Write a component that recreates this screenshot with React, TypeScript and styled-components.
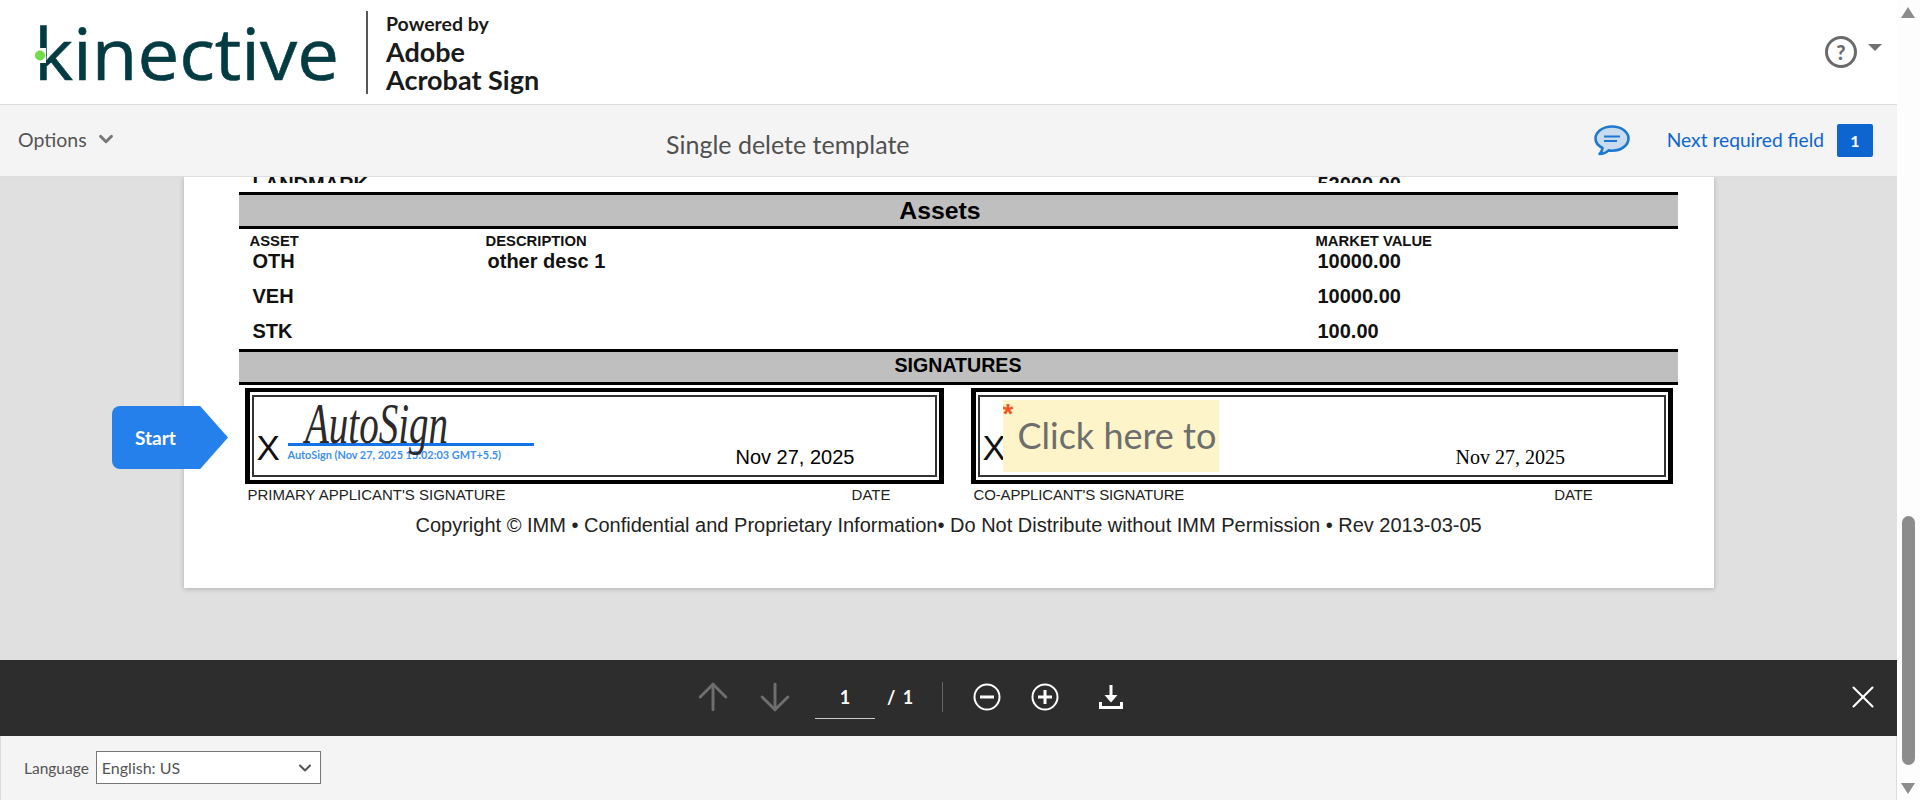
import React from 'react'
import styled, { createGlobalStyle } from 'styled-components'
import { ArrowUp, ArrowDown, X as CloseIcon, ChevronDown } from 'lucide-react'

const GlobalStyle = createGlobalStyle`
  html, body {
    margin: 0;
    height: 100%;
    overflow: hidden;
    background: #fff;
  }
  * {
    box-sizing: border-box;
  }
`

const UI_FONT = `Lato, "Open Sans", sans-serif`
const DOC_FONT = `"Liberation Sans", Arial, sans-serif`

const Shell = styled.div`
  display: flex;
  width: 1920px;
  height: 800px;
  overflow: hidden;
  font-family: ${UI_FONT};
`
const Main = styled.div`
  display: flex;
  flex-direction: column;
  width: 1897px;
  height: 800px;
`
const Header = styled.header`
  display: flex;
  align-items: center;
  height: 105px;
  flex: none;
  padding: 0 15px 0 37px;
  background: #fff;
  border-bottom: 1px solid #dcdcdc;
`
const LogoDrawing = styled.svg`
  display: block;
  flex: none;
  overflow: visible;
`
const Divider = styled.div`
  width: 2px;
  height: 83px;
  margin-left: 29px;
  background: #555;
`
const Powered = styled.div`
  display: flex;
  flex-direction: column;
  margin-left: 18px;
  color: #1a1a1a;
  font-weight: 700;
`
const PoweredBy = styled.span`
  margin: 2px 0;
  font-size: 19.500px;
  line-height: 24px;
`
const BrandLine = styled.span`
  font-size: 27px;
  line-height: 28px;
  white-space: nowrap;
`
const HelpGroup = styled.div`
  display: flex;
  align-items: center;
  gap: 11px;
  margin-left: auto;
  margin-top: -1px;
`
const HelpCircle = styled.span`
  display: flex;
  align-items: center;
  justify-content: center;
  width: 32px;
  height: 32px;
  border: 3px solid #6a6a6a;
  border-radius: 50%;
  color: #6a6a6a;
  font-size: 20px;
  font-weight: 900;
`
const Caret = styled.span`
  width: 0;
  height: 0;
  margin-top: -8px;
  border-left: 7px solid transparent;
  border-right: 7px solid transparent;
  border-top: 7px solid #707070;
`
const Toolbar = styled.div`
  display: flex;
  align-items: center;
  height: 72px;
  flex: none;
  padding-right: 24px;
  background: #f4f4f4;
  border-bottom: 1px solid #dedede;
`
const OptionsButton = styled.div`
  display: flex;
  align-items: center;
  gap: 8px;
  width: 666px;
  padding: 0 0 3px 18px;
  color: #555;
  font-size: 19.500px;
  flex: none;
`
const Title = styled.div`
  color: #505050;
  font-size: 25px;
  margin-top: 6px;
`
const ToolbarRight = styled.div`
  display: flex;
  align-items: center;
  margin-left: auto;
`
const NextField = styled.span`
  margin: 0 0 3px 37px;
  color: #0d66d0;
  font-size: 19.200px;
  white-space: nowrap;
`
const CountBadge = styled.span`
  display: flex;
  align-items: center;
  justify-content: center;
  width: 36px;
  height: 33px;
  margin-left: 13px;
  border-radius: 2px;
  background: #0d66d0;
  color: #fff;
  font-size: 16px;
  font-weight: 700;
`
const Canvas = styled.main`
  position: relative;
  flex: 1;
  min-height: 0;
  overflow: hidden;
  background: #e0e0e0;
`
const Page = styled.div`
  width: 1530px;
  height: 411px;
  margin: 0 auto;
  padding: 0 36px 0 55px;
  overflow: hidden;
  background: #fff;
  box-shadow: 0 1px 5px rgba(0, 0, 0, 0.22);
  font-family: ${DOC_FONT};
  color: #111;
`
const ClippedRow = styled.div`
  display: grid;
  grid-template-columns: 235px 830px 1fr;
  align-items: end;
  height: 6px;
  margin-bottom: 9px;
  padding-left: 14px;
  overflow: hidden;
  font-size: 20px;
  font-weight: 700;
  line-height: 14px;
`
const Band = styled.div<{ $tall?: boolean }>`
  display: flex;
  align-items: center;
  justify-content: center;
  height: ${(p) => (p.$tall ? 37 : 36)}px;
  padding: ${(p) => (p.$tall ? '0 36px 0 0' : '0 0 3px')};
  border-top: 3px solid #000;
  border-bottom: 3px solid #000;
  background: #bfbfbf;
  color: #000;
  font-weight: 700;
  font-size: ${(p) => (p.$tall ? 24.8 : 19.6)}px;
`
const LabelRow = styled.div`
  display: grid;
  grid-template-columns: 236px 830px 1fr;
  padding: 5px 0 0 11px;
  font-size: 14.800px;
  font-weight: 700;
  line-height: 15px;
`
const ValueList = styled.div`
  display: flex;
  flex-direction: column;
  gap: 11px;
  margin-bottom: 6px;
`
const ValueRow = styled.div`
  display: grid;
  grid-template-columns: 235px 830px 1fr;
  padding-left: 14px;
  font-size: 20px;
  font-weight: 700;
  line-height: 24px;
`
const Boxes = styled.div`
  display: flex;
  gap: 27px;
  margin: 3px 0 0 6px;
`
const SignBox = styled.div<{ $width: number }>`
  width: ${(p) => p.$width}px;
  height: 96px;
  padding: 3px 2px;
  border: 4px solid #000;
  border-left-width: 5px;
  border-right-width: 5px;
`
const SignInner = styled.div`
  position: relative;
  display: flex;
  align-items: flex-end;
  height: 100%;
  padding-left: 3px;
  border: 2px solid #333;
`
const BigX = styled.span`
  width: 31px;
  flex: none;
  margin-bottom: 7px;
  font-size: 35px;
  line-height: 40px;
  color: #111;
`
const SignArea = styled.div`
  display: flex;
  flex-direction: column;
  width: 246px;
  margin-bottom: 13px;
`
const SignLine = styled.div`
  height: 3px;
  background: #1473e6;
`
const SignCaption = styled.span`
  margin-top: 1px;
  color: #3d8ff0;
  font-family: ${UI_FONT};
  font-size: 10.900px;
  font-weight: 700;
  line-height: 15px;
  white-space: nowrap;
`
const Handwriting = styled.svg`
  position: absolute;
  left: 51px;
  top: 4px;
  overflow: visible;
`
const SignDate = styled.span<{ $serif?: boolean; $left: number }>`
  margin-left: ${(p) => p.$left}px;
  margin-bottom: 6px;
  color: #000;
  font-family: ${(p) => (p.$serif ? `"Liberation Serif", serif` : DOC_FONT)};
  font-size: 20px;
  line-height: 24px;
  white-space: nowrap;
`
const SignField = styled.div`
  position: relative;
  display: flex;
  align-items: center;
  width: 216px;
  height: 72px;
  flex: none;
  margin: 0 0 3px -11px;
  padding: 0 0 2px 15px;
  overflow: hidden;
  background: #fdf5c9;
  color: #6e6e6e;
  font-family: ${UI_FONT};
  font-size: 36px;
  white-space: nowrap;
`
const RequiredStar = styled.span`
  position: absolute;
  left: 0;
  top: 0;
  color: #f0561d;
  font-family: ${DOC_FONT};
  font-size: 28px;
  font-weight: 700;
  line-height: 28px;
`
const CaptionRow = styled.div`
  display: flex;
  gap: 83px;
  margin: 2px 0 0 9px;
  font-size: 15px;
  line-height: 18px;
  color: #222;
`
const Caption = styled.div<{ $width: number; $narrow?: boolean }>`
  display: flex;
  justify-content: space-between;
  width: ${(p) => p.$width}px;
  letter-spacing: ${(p) => (p.$narrow ? '-0.15px' : '0')};
`
const Copyright = styled.div`
  margin: 9px 0 0 177px;
  font-size: 20px;
  line-height: 24px;
  color: #222;
  white-space: nowrap;
`
const StartTag = styled.div`
  position: absolute;
  left: 112px;
  top: 229px;
  display: flex;
  align-items: center;
  width: 116px;
  height: 63px;
  padding-left: 23px;
  border-radius: 8px 0 0 8px;
  background: #2680eb;
  clip-path: polygon(0 0, 76% 0, 100% 50%, 76% 100%, 0 100%);
  color: #fff;
  font-size: 19px;
  font-weight: 700;
`
const PdfBar = styled.div`
  display: flex;
  align-items: center;
  height: 76px;
  flex: none;
  padding: 0 15px 2px 691px;
  background: #2d2d2d;
  color: #fff;
`
const PageInput = styled.span`
  display: block;
  width: 60px;
  height: 40px;
  margin: 4px 0 0 18.5px;
  border-bottom: 1px solid #ccc;
  font-size: 18px;
  font-weight: 700;
  line-height: 36px;
  text-align: center;
`
const PageTotal = styled.span`
  margin: 0 0 0 12px;
  font-size: 18px;
  font-weight: 700;
  word-spacing: 3px;
  white-space: nowrap;
`
const BarSeparator = styled.span`
  width: 1px;
  height: 30px;
  margin: 0 30px 0 29px;
  background: #666;
`
const IconSlot = styled.span<{ $right?: number; $muted?: boolean }>`
  display: flex;
  margin-right: ${(p) => p.$right ?? 0}px;
  color: ${(p) => (p.$muted ? '#6e6e6e' : '#fff')};
`
const CloseSlot = styled.span`
  display: flex;
  margin-left: auto;
`
const Footer = styled.footer`
  display: flex;
  align-items: center;
  gap: 7px;
  height: 64px;
  flex: none;
  padding: 0 0 1px 23px;
  background: #f4f4f4;
  border-left: 1px solid #ddd;
  border-right: 1px solid #ddd;
  color: #555;
  font-size: 15.500px;
`
const LangSelect = styled.div`
  display: flex;
  align-items: center;
  justify-content: space-between;
  width: 225px;
  height: 33px;
  padding: 0 5px;
  border: 1px solid #777;
  background: #fff;
  font-size: 16px;
`
const ScrollTrack = styled.div`
  position: relative;
  width: 23px;
  height: 800px;
  flex: none;
  background: #fdfdfd;
`
const ScrollThumb = styled.div`
  position: absolute;
  left: 5px;
  top: 516px;
  width: 13px;
  height: 249px;
  border-radius: 7px;
  background: #8c8c8c;
`
const ScrollArrow = styled.span<{ $down?: boolean }>`
  position: absolute;
  left: 4px;
  top: ${(p) => (p.$down ? 783 : 7)}px;
  width: 0;
  height: 0;
  border-left: 7.5px solid transparent;
  border-right: 7.5px solid transparent;
  ${(p) => (p.$down ? 'border-top: 11px solid #8c8c8c;' : 'border-bottom: 11px solid #8c8c8c;')}
`

const Logo = () => (
  <LogoDrawing width="300" height="62" viewBox="0 0 300 62">
    <text
      x="-3"
      y="59"
      fontFamily="'Open Sans', sans-serif"
      fontSize="72"
      fontWeight="400"
      fill="#033b42"
      stroke="#033b42"
      strokeWidth="0.6"
      textLength="305"
      lengthAdjust="spacingAndGlyphs"
    >
      kinective
    </text>
    <rect x="-2" y="27" width="11" height="15" fill="#fff" />
    <circle cx="3" cy="34.500" r="5" fill="#6fdc4a" />
  </LogoDrawing>
)

const CommentIcon = () => (
  <svg width="36" height="31" viewBox="0 0 36 31">
    <path
      d="M18 1.500C8.800 1.500 1.500 7 1.500 13.500c0 4 2.700 7.300 7 9.500-.3 2.500-1.300 4.500-3 6 3.500 0 6.500-1.200 9-3.600 1.100.2 2.300.3 3.500.3 9.200 0 16.500-5.500 16.500-12.200S27.200 1.500 18 1.500z"
      fill="#c9dcef"
      stroke="#1f78cf"
      strokeWidth="2.600"
      strokeLinejoin="round"
    />
    <path d="M10 11.500h16M10 16h13" stroke="#1f78cf" strokeWidth="1.800" />
  </svg>
)

const ZoomIcon = ({ plus }: { plus?: boolean }) => (
  <svg width="28" height="28" viewBox="0 0 28 28" fill="none" stroke="#fff">
    <circle cx="14" cy="14" r="12.500" strokeWidth="2" />
    <path d="M7 14h14" strokeWidth="3" />
    {plus && <path d="M14 7v14" strokeWidth="3" />}
  </svg>
)

const DownloadIcon = () => (
  <svg width="24" height="24" viewBox="0 0 24 24" fill="#fff">
    <path d="M10.500 0h3v11h-3z" />
    <path d="M5.500 10h13L12 17.500z" />
    <path d="M0 17h3v4h18v-4h3v7H0z" />
  </svg>
)

const App = () => (
  <Shell>
    <GlobalStyle />
    <Main>
      <Header>
        <Logo />
        <Divider />
        <Powered>
          <PoweredBy>Powered by</PoweredBy>
          <BrandLine>Adobe</BrandLine>
          <BrandLine>Acrobat Sign</BrandLine>
        </Powered>
        <HelpGroup>
          <HelpCircle>?</HelpCircle>
          <Caret />
        </HelpGroup>
      </Header>
      <Toolbar>
        <OptionsButton>
          Options
          <ChevronDown size={22} strokeWidth={3.200} color="#777" />
        </OptionsButton>
        <Title>Single delete template</Title>
        <ToolbarRight>
          <CommentIcon />
          <NextField>Next required field</NextField>
          <CountBadge>1</CountBadge>
        </ToolbarRight>
      </Toolbar>
      <Canvas>
        <Page>
          <ClippedRow>
            <span>LANDMARK</span>
            <span />
            <span>52000.00</span>
          </ClippedRow>
          <Band $tall>Assets</Band>
          <LabelRow>
            <span>ASSET</span>
            <span>DESCRIPTION</span>
            <span>MARKET VALUE</span>
          </LabelRow>
          <ValueList>
            <ValueRow>
              <span>OTH</span>
              <span>other desc 1</span>
              <span>10000.00</span>
            </ValueRow>
            <ValueRow>
              <span>VEH</span>
              <span />
              <span>10000.00</span>
            </ValueRow>
            <ValueRow>
              <span>STK</span>
              <span />
              <span>100.00</span>
            </ValueRow>
          </ValueList>
          <Band>SIGNATURES</Band>
          <Boxes>
            <SignBox $width={699}>
              <SignInner>
                <BigX>X</BigX>
                <SignArea>
                  <SignLine />
                  <SignCaption>AutoSign (Nov 27, 2025 15:02:03 GMT+5.5)</SignCaption>
                </SignArea>
                <Handwriting width="143" height="56" viewBox="0 0 143 56">
                  <text
                    x="0"
                    y="42"
                    fontFamily="'Liberation Serif', serif"
                    fontStyle="italic"
                    fontSize="58"
                    fill="#2a2a2a"
                    textLength="143"
                    lengthAdjust="spacingAndGlyphs"
                  >
                    AutoSign
                  </text>
                </Handwriting>
                <SignDate $left={202}>Nov 27, 2025</SignDate>
              </SignInner>
            </SignBox>
            <SignBox $width={702}>
              <SignInner>
                <BigX>X</BigX>
                <SignField>
                  <RequiredStar>*</RequiredStar>
                  Click here to
                </SignField>
                <SignDate $serif $left={237}>
                  Nov 27, 2025
                </SignDate>
              </SignInner>
            </SignBox>
          </Boxes>
          <CaptionRow>
            <Caption $width={643}>
              <span>PRIMARY APPLICANT'S SIGNATURE</span>
              <span>DATE</span>
            </Caption>
            <Caption $width={619} $narrow>
              <span>CO-APPLICANT'S SIGNATURE</span>
              <span>DATE</span>
            </Caption>
          </CaptionRow>
          <Copyright>
            Copyright © IMM • Confidential and Proprietary Information• Do Not Distribute without IMM Permission • Rev 2013-03-05
          </Copyright>
        </Page>
        <StartTag>Start</StartTag>
      </Canvas>
      <PdfBar>
        <IconSlot $muted $right={17.500}>
          <ArrowUp size={44} strokeWidth={1.600} />
        </IconSlot>
        <IconSlot $muted>
          <ArrowDown size={44} strokeWidth={1.600} />
        </IconSlot>
        <PageInput>1</PageInput>
        <PageTotal>/ 1</PageTotal>
        <BarSeparator />
        <IconSlot $right={30}>
          <ZoomIcon />
        </IconSlot>
        <IconSlot $right={40}>
          <ZoomIcon plus />
        </IconSlot>
        <IconSlot>
          <DownloadIcon />
        </IconSlot>
        <CloseSlot>
          <CloseIcon size={38} strokeWidth={1.300} color="#fff" />
        </CloseSlot>
      </PdfBar>
      <Footer>
        Language
        <LangSelect>
          English: US
          <ChevronDown size={20} strokeWidth={2.500} color="#555" />
        </LangSelect>
      </Footer>
    </Main>
    <ScrollTrack>
      <ScrollArrow />
      <ScrollThumb />
      <ScrollArrow $down />
    </ScrollTrack>
  </Shell>
)

export default App
